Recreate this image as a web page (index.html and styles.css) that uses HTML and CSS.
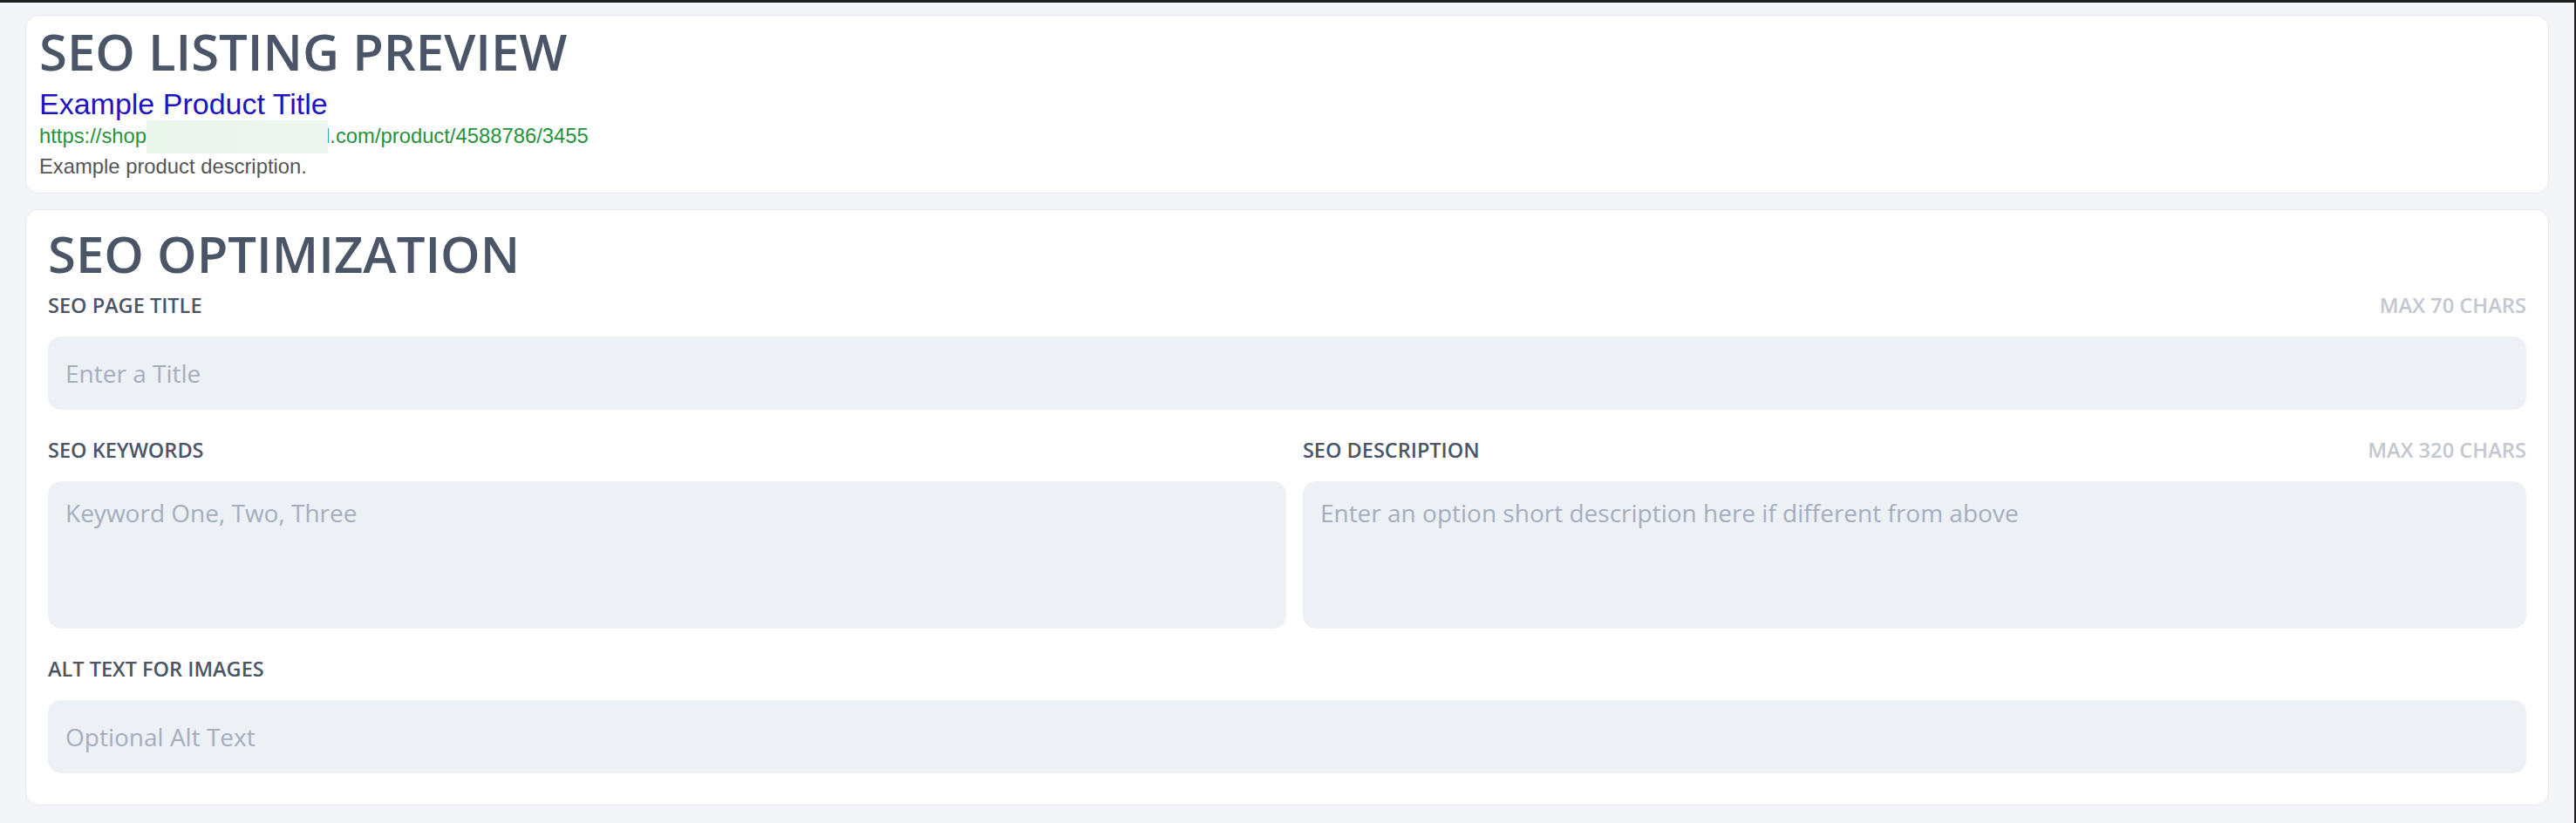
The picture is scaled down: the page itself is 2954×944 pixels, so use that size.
FILE: index.html
```html
<!DOCTYPE html>
<html lang="en">
<head>
    <meta charset="UTF-8">
    <meta name="viewport" content="width=device-width, initial-scale=1.0">
    <title>SEO</title>
    <link rel="stylesheet" href="styles.css">
</head>
<body>
    <div class="page">
        <section class="card preview">
            <h2 class="card-title">SEO LISTING PREVIEW</h2>
            <div class="serp-title">Example Product Title</div>
            <div class="serp-url">https://shop<span class="redacted"></span>l.com/product/4588786/3455</div>
            <div class="serp-desc">Example product description.</div>
        </section>

        <section class="card seo">
            <h2 class="card-title">SEO OPTIMIZATION</h2>
            <div class="fields">
                <div class="field">
                    <div class="field-head">
                        <label for="seoTitle">SEO PAGE TITLE</label>
                        <span class="hint">MAX 70 CHARS</span>
                    </div>
                    <input type="text" id="seoTitle" placeholder="Enter a Title">
                </div>

                <div class="field-row">
                    <div class="field">
                        <div class="field-head">
                            <label for="seoKeywords">SEO KEYWORDS</label>
                        </div>
                        <textarea id="seoKeywords" placeholder="Keyword One, Two, Three"></textarea>
                    </div>
                    <div class="field">
                        <div class="field-head">
                            <label for="seoDesc">SEO DESCRIPTION</label>
                            <span class="hint">MAX 320 CHARS</span>
                        </div>
                        <textarea id="seoDesc" placeholder="Enter an option short description here if different from above"></textarea>
                    </div>
                </div>

                <div class="field">
                    <div class="field-head">
                        <label for="altText">ALT TEXT FOR IMAGES</label>
                    </div>
                    <input type="text" id="altText" placeholder="Optional Alt Text">
                </div>
            </div>
        </section>
    </div>
</body>
</html>
```

FILE: styles.css
```css
* {
    box-sizing: border-box;
}
html, body {
    margin: 0;
    padding: 0;
}
body {
    min-height: 100vh;
    background-color: #f4f5f9;
    border-top: 3px solid #1f1f1f;
    border-right: 2px solid #1f1f1f;
    font-family: "Open Sans", sans-serif;
}
.page {
    display: flex;
    flex-direction: column;
    gap: 18px;
    padding: 14px 29px 0;
}
.card {
    background-color: #fff;
    border: 1px solid #e4e7ec;
    border-radius: 15px;
}
.card-title {
    margin: 0;
    font-size: 58px;
    line-height: 58px;
    font-weight: 600;
    color: #4a5568;
}

/* preview card */
.preview {
    padding: 12px 15px 15px;
}
.serp-title {
    margin-top: 12px;
    font-family: "Liberation Sans", Arial, sans-serif;
    font-size: 34px;
    line-height: 38px;
    color: #2014c0;
}
.serp-url,
.serp-desc {
    font-family: "Liberation Sans", Arial, sans-serif;
    font-size: 23.8px;
}
.serp-url {
    line-height: 36px;
    color: #25933b;
}
.serp-desc {
    line-height: 30px;
    color: #555;
}
.redacted {
    position: relative;
    display: inline-block;
    width: 208px;
    height: 38px;
    margin-right: -3px;
    vertical-align: -12px;
    background: linear-gradient(90deg, #e9f4eb, #eef6f0);
}

/* form card */
.seo {
    padding: 21px 25px 36px;
}
.seo .card-title {
    margin-bottom: 15px;
}
.fields {
    display: flex;
    flex-direction: column;
    gap: 31px;
}
.field-row {
    display: grid;
    grid-template-columns: minmax(0, 1.012fr) minmax(0, 1fr);
    gap: 19px;
}
.field-head {
    display: flex;
    justify-content: space-between;
    align-items: baseline;
    margin-bottom: 21px;
    line-height: 30px;
}
.field-head label {
    font-size: 23.5px;
    font-weight: 600;
    color: #4a5568;
}
.hint {
    font-size: 23.7px;
    font-weight: 600;
    color: #c3c7cf;
}
input, textarea {
    display: block;
    width: 100%;
    border: none;
    border-radius: 15px;
    background-color: #edf0f5;
    font-family: "Open Sans", sans-serif;
    font-size: 28px;
    color: #4a5568;
    outline: none;
}
input {
    height: 84px;
    padding: 0 20px;
}
textarea {
    height: 169px;
    padding: 16px 20px;
    line-height: 40px;
    resize: none;
}
input::placeholder,
textarea::placeholder {
    color: #a5aebe;
    opacity: 1;
}
```
